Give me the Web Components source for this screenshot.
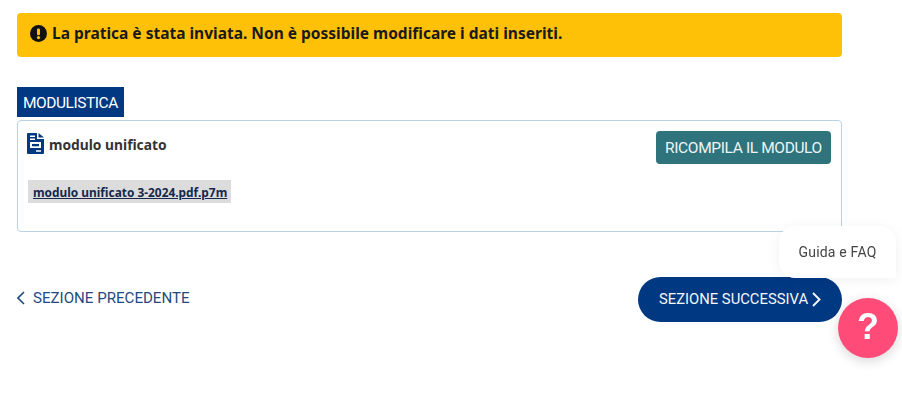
<!DOCTYPE html>
<html lang="it">
<head>
<meta charset="utf-8">
<title>Modulistica</title>
<style>
  html, body { margin: 0; background: #fff; }
  body { font-family: "Noto Sans", "Liberation Sans", sans-serif; overflow: hidden; }
</style>
</head>
<body>
<pratica-page>
  <alert-bar>La pratica è stata inviata. Non è possibile modificare i dati inseriti.</alert-bar>
  <modulo-card title="MODULISTICA" name="modulo unificato" action="RICOMPILA IL MODULO" file="modulo unificato 3-2024.pdf.p7m"></modulo-card>
  <section-nav prev="SEZIONE PRECEDENTE" next="SEZIONE SUCCESSIVA"></section-nav>
</pratica-page>
<help-widget label="Guida e FAQ"></help-widget>

<script>
class PraticaPage extends HTMLElement {
  constructor() {
    super();
    this.attachShadow({ mode: 'open' });
    this.shadowRoot.innerHTML = `
      <style>
        :host { display: flex; flex-direction: column; width: 825px; padding: 13px 0 0 17px; }
      </style>
      <slot></slot>`;
  }
}

class AlertBar extends HTMLElement {
  constructor() {
    super();
    this.attachShadow({ mode: 'open' });
    this.shadowRoot.innerHTML = `
      <style>
        :host {
          display: flex; align-items: center; gap: 5px; height: 44px; padding: 0 13px;
          background: #ffc107; border-radius: 4px; color: #1a1a1a;
          font: 700 15.5px "Noto Sans", sans-serif;
        }
        svg { width: 17px; height: 17px; flex: none; margin-top: -3px; }
        span { margin-top: -5px; }
      </style>
      <svg viewBox="0 0 17 17">
        <circle cx="8.5" cy="8.5" r="8.5" fill="#111"/>
        <rect x="7" y="3.4" width="3" height="6.8" rx="1.2" fill="#ffc107"/>
        <circle cx="8.5" cy="12.6" r="1.6" fill="#ffc107"/>
      </svg>
      <span><slot></slot></span>`;
  }
}

class ModuloCard extends HTMLElement {
  constructor() {
    super();
    this.attachShadow({ mode: 'open' });
    this.shadowRoot.innerHTML = `
      <style>
        :host { display: block; margin-top: 30px; }
        .tab {
          display: flex; align-items: center; width: 107px; height: 30px; box-sizing: border-box;
          padding: 1px 0 0 6px; background: #003882; color: #fff; font: 400 15.5px "Roboto", sans-serif;
          letter-spacing: -.45px; white-space: nowrap;
        }
        .box {
          margin-top: 3px; height: 112px; box-sizing: border-box; padding: 10px 10px 0 9px;
          border: 1px solid #b9d3e3; border-radius: 4px;
          display: flex; flex-direction: column;
        }
        .head { display: flex; justify-content: space-between; align-items: flex-start; }
        .name { display: flex; align-items: center; gap: 5px; height: 25px; color: #333;
          font: 700 13.8px "Noto Sans", sans-serif; }
        .name span { margin-top: 1px; }
        .name svg { width: 17px; height: 21px; flex: none; }
        button {
          width: 175px; height: 33px; margin-top: 0; border: 0; border-radius: 4px; padding: 0;
          background: #2f737c; color: #ecf6f7; font: 400 15.5px "Roboto", sans-serif;
          letter-spacing: -.37px; white-space: nowrap;
        }
        a {
          display: flex; align-items: center; align-self: flex-start; width: 203px; height: 23px;
          box-sizing: border-box; padding-left: 5px; margin: 16px 0 0 1px; background: #dcdcdc;
          color: #14284b; font: 700 11.9px "Noto Sans", sans-serif; text-decoration: underline; white-space: nowrap;
        }
      </style>
      <div class="tab" id="title"></div>
      <div class="box">
        <div class="head">
          <div class="name">
            <svg viewBox="0 0 17 21">
              <path fill="#003882" fill-rule="evenodd" d="M1 0H10V6H17V20a1 1 0 0 1-1 1H1a1 1 0 0 1-1-1V1A1 1 0 0 1 1 0ZM3 2.6V4.1H8V2.6ZM3 5.5V7H8V5.5ZM3 9V15H14V9ZM5 11H12V13.2H5ZM9 17.2V18.7H14V17.2Z"/>
              <path fill="#003882" d="M11.5 0 17 4.6H11.5Z"/>
            </svg>
            <span id="name"></span>
          </div>
          <button id="action"></button>
        </div>
        <a href="#" id="file"></a>
      </div>`;
  }
  connectedCallback() {
    for (const id of ['title', 'name', 'action', 'file']) {
      this.shadowRoot.getElementById(id).textContent = this.getAttribute(id);
    }
  }
}

class SectionNav extends HTMLElement {
  constructor() {
    super();
    this.attachShadow({ mode: 'open' });
    this.shadowRoot.innerHTML = `
      <style>
        :host { display: flex; justify-content: space-between; align-items: center; margin-top: 45px; }
        a { display: flex; align-items: center; text-decoration: none; white-space: nowrap; }
        .prev { gap: 8px; color: #1f4a80; font: 400 15.1px "Roboto", sans-serif; margin-top: -3px; }
        .prev svg { width: 8px; height: 14px; }
        .next {
          gap: 4px; width: 204px; height: 45px; box-sizing: border-box; justify-content: center;
          border-radius: 23px; background: #003882; color: #f4f7fb; font: 400 14.8px "Roboto", sans-serif;
        }
        .next span { margin-top: -1px; }
        .next svg { width: 9px; height: 15px; margin-top: -1px; }
      </style>
      <a href="#" class="prev">
        <svg viewBox="0 0 8 14"><path d="M7 1 1 7l6 6" fill="none" stroke="#1f4a80" stroke-width="1.6"/></svg>
        <span id="prev"></span>
      </a>
      <a href="#" class="next">
        <span id="next"></span>
        <svg viewBox="0 0 9 15"><path d="M1 1l6.5 6.5L1 14" fill="none" stroke="#f4f7fb" stroke-width="1.9"/></svg>
      </a>`;
  }
  connectedCallback() {
    this.shadowRoot.getElementById('prev').textContent = this.getAttribute('prev');
    this.shadowRoot.getElementById('next').textContent = this.getAttribute('next');
  }
}

class HelpWidget extends HTMLElement {
  constructor() {
    super();
    this.attachShadow({ mode: 'open' });
    this.shadowRoot.innerHTML = `
      <style>
        :host { position: fixed; left: 779px; top: 226px; width: 119px; height: 132px; display: block; }
        .label {
          position: absolute; left: 0; top: 0; width: 117px; height: 52px;
          display: flex; align-items: center; justify-content: center;
          background: #fff; border-radius: 16px 16px 0 16px;
          box-shadow: 0 2px 14px rgba(0,0,0,.06);
          color: #444; font: 400 14px "Roboto", sans-serif; letter-spacing: .2px;
        }
        .fab {
          position: absolute; left: 59px; top: 72px; width: 60px; height: 60px; border-radius: 50%;
          background: #ff4b77; box-shadow: 0 3px 12px rgba(0,0,0,.16);
          display: flex; align-items: center; justify-content: center;
          color: #fff; font: 700 36px "Liberation Sans", sans-serif;
        }
        .fab span { margin-top: -3px; }
      </style>
      <div class="label" id="label"></div>
      <div class="fab"><span>?</span></div>`;
  }
  connectedCallback() {
    this.shadowRoot.getElementById('label').textContent = this.getAttribute('label');
  }
}

customElements.define('pratica-page', PraticaPage);
customElements.define('alert-bar', AlertBar);
customElements.define('modulo-card', ModuloCard);
customElements.define('section-nav', SectionNav);
customElements.define('help-widget', HelpWidget);
</script>
</body>
</html>
